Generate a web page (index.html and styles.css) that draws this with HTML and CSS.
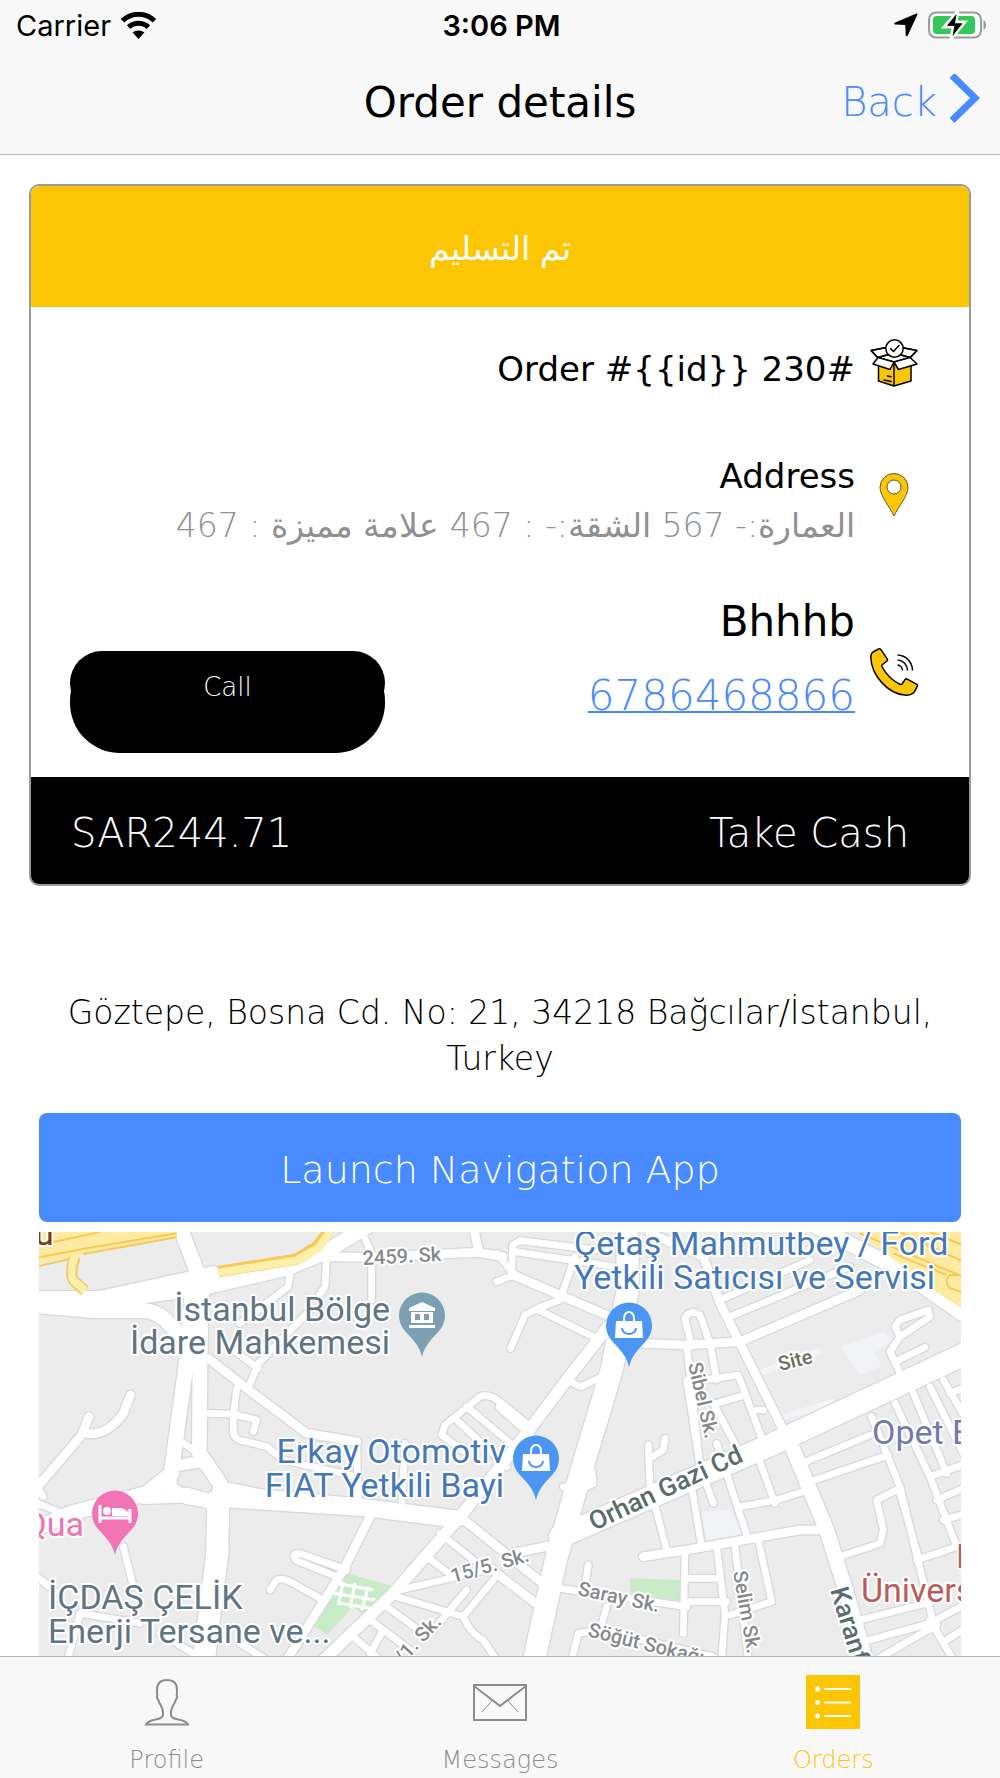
FILE: index.html
```html
<!DOCTYPE html>
<html lang="en">
<head>
  <meta charset="UTF-8">
  <meta name="viewport" content="width=device-width, initial-scale=1.0">
  <title>Order details</title>
  <link rel="stylesheet" href="styles.css">
</head>
<body>
  <header>
    <div class="status-bar">
      <div class="status-left">
        <span>Carrier</span>
        <svg class="wifi" width="37" height="27" viewBox="0 0 37 27">
          <path d="M2.5 8.8a23 23 0 0 1 32 0" />
          <path d="M8.6 15.2a14.500 14.500 0 0 1 19.800 0" />
          <path class="dot" d="M12.600 20.600a9 9 0 0 1 11.800 0L18.500 27z" />
        </svg>
      </div>
      <span class="time">3:06 PM</span>
      <div class="status-right">
        <svg width="24" height="24" viewBox="0 0 24 24">
          <path d="M22.500.6 1.200 9.400c-1.600.7-1.200 2.100.3 2.200l9.800.4.400 10c.1 1.500 1.500 1.700 2.200.2L23.400 1.500c.4-.9-.2-1.200-.9-.9z" />
        </svg>
        <svg width="60" height="30" viewBox="0 0 60 30">
          <rect x="2" y="2.500" width="52" height="25" rx="7" fill="none" stroke="#9c9c9c" stroke-width="2" />
          <path d="M56.500 10c3.500 1.500 3.500 8.500 0 10z" fill="#9c9c9c" />
          <rect x="6" y="6" width="42" height="18" rx="4" fill="#34c759" />
          <path d="M31 1 17 17h9l-2 12 14-17h-9z" stroke="#f8f8f8" stroke-width="3" />
          <path d="M29.500 4 20 15.700h7.500L25.500 26 35.500 13.500H28z" />
        </svg>
      </div>
    </div>
    <div class="title-bar">
      <h1>Order details</h1>
      <a class="back" href="#orders">Back
        <svg width="31" height="56" viewBox="0 0 31 56"><path d="M3 1.500 26 24 3 46.500" /></svg>
      </a>
    </div>
  </header>

  <main>
    <section class="card">
      <div class="card-status" lang="ar" dir="rtl">تم التسليم</div>

      <div class="card-body">
        <div class="item">
          <div class="text"><h2>Order #{{id}} 230#</h2></div>
          <svg class="icon" viewBox="0 0 48 48">
            <g stroke="#000" stroke-width="1.500" stroke-linejoin="round">
              <path d="M8.500 24v18L24 47l17-5V24L24 24z" fill="#fdc605" />
              <path d="M24 24v23" />
              <path d="M1 11.500 8 19l15 4 17-4 7-7.500L24 7z" fill="#fff" />
              <path d="M8 18.500 24 14l16 4.500L24 23z" fill="#fff" />
              <path d="M1 11.500 19 8M47 11.500 29 8M1 11.500l7 7L24 14l16 4.500 7-7" fill="none" />
              <path d="M8 18.500 24 23l-4 7.500L3 25z" fill="#fff" />
              <path d="M40 18.500 24 23l4.500 7.500L47 25z" fill="#fff" />
              <circle cx="24.500" cy="9.500" r="8.700" fill="#fff" />
              <path d="m20.500 9.500 3 3 5.500-6M14 41l7 1.500M17.500 37l3.500.7" fill="none" stroke-linecap="round" />
            </g>
          </svg>
        </div>

        <div class="item">
          <div class="text">
            <h2>Address</h2>
            <p lang="ar" dir="rtl">العمارة:- 567 الشقة:- : 467 علامة مميزة : 467</p>
          </div>
          <svg class="icon" viewBox="0 0 48 48">
            <path d="M24 45C20 36 10 25 10 16.500a14 14 0 0 1 28 0C38 25 28 36 24 45z" fill="#fdc605" stroke="#5b5640" />
            <circle cx="24" cy="16" r="7" fill="#fff" stroke="#5b5640" />
          </svg>
        </div>

        <div class="item contact">
          <div class="call-wrap"><button class="call">Call</button></div>
          <div class="text">
            <h3>Bhhhb</h3>
            <a class="phone" href="tel:6786468866">6786468866</a>
          </div>
          <svg class="icon" viewBox="0 0 48 48">
            <path d="M3 4 8.500 1c1-.5 1.800-.3 2.400.6l6.300 9.200c.6.900.4 1.600-.3 2.200L12.500 16.500c-.8.700-.8 1.500-.3 2.500C16 26 22 32.500 30 36.200c1 .4 1.800.3 2.300-.6l2.700-4c.6-.8 1.400-.9 2.300-.5l9.200 5c1 .6 1.200 1.400.7 2.300l-2.500 5c-2 3-5.500 4.200-10 3.600C18 45.500 1.500 28 .8 9.500.8 7 1.500 5 3 4z" fill="#fdc605" stroke="#000" stroke-width="1.500" />
            <path d="M27.500 7A15.500 15.500 0 0 1 42.500 22.500M27.500 12A10.500 10.500 0 0 1 37.500 22.500M27.500 17a5.500 5.500 0 0 1 5 5.500" fill="none" stroke="#000" stroke-width="1.500" />
          </svg>
        </div>
      </div>

      <div class="card-footer">
        <span>SAR244.71</span>
        <span>Take Cash</span>
      </div>
    </section>

    <p class="destination">Göztepe, Bosna Cd. No: 21, 34218 Bağcılar/İstanbul, Turkey</p>

    <div class="navigation">
      <button class="launch">Launch Navigation App</button>
      <svg class="map" viewBox="0 0 922 424" preserveAspectRatio="xMidYMin slice">
        <defs>
          <g id="roads">
            <g class="w20">
              <path d="M745 505 775 430 930 270M700 390 775 445M870 160 865 200 720 310M980 110 975 200 955 230M1090 45 1115 100V240M710 505 700 590M615 580 700 582 770 600 760 635M700 590V640Q705 662 740 665L800 680 850 720 1070 770M1070 670 1075 850M1215 670 1205 860M545 665 580 690" />
              <path d="M100 780 130 830M100 845 200 885M370 980 400 1100M100 1060 165 1115M1040 1050 900 1000Q870 1000 890 1022L1010 1070M810 1110 825 1085Q840 1070 870 1085L960 1135M200 1330 240 1180 420 1210M480 1240 580 1300M720 1270 800 1320" />
              <path d="M1320 940 1420 1020M1280 1010 1360 1070M1200 1110 1480 1045M1190 1130 1390 1190Q1410 1240 1450 1260L1490 1320M1160 1160 1270 1240M1110 1200 1230 1290M1150 1230 1110 1300M1060 1250 1140 1320M1390 1190 1480 1080M1300 1230 1400 1110" />
              <path d="M1400 560 1580 710M1370 600 1520 740M1325 645 1335 615 1440 530Q1465 520 1500 545L1590 620M1325 645 1400 700" />
            </g>
            <g class="w20" transform="translate(1500 0)">
              <path d="M35 170 38 75 60 62 330 95M45 95 340 140M-10 100 40 160M-10 185 40 165M185 225 225 110M32 385 75 285 120 262 180 240M115 270 290 355M200 480 242 500 295 475" />
              <path d="M660 240 930 120M690 290 1050 140M575 380 555 295Q570 265 600 285L630 370 650 480M560 375 600 740 640 850M560 480 600 740M560 490 610 480 715 465 735 520 795 680M650 550 735 525M640 550 720 700M770 570H790" />
              <path d="M575 800 605 980M650 670 745 960M720 860 830 840 910 815M770 700 825 850M450 800 500 990M445 675 450 800M450 715 490 690 495 655M250 805 280 790 275 750M190 800 230 830" />
              <path d="M555 990 550 1240M565 1075H655M560 1145H680M650 980 675 1180 665 1320M775 960 815 1145 690 1185M705 980 745 1320M180 1105 560 1160M265 1035 255 1100M320 1160 300 1230M215 1320 235 1240 300 1230 640 1310" />
              <path d="M1210 480 1170 395 1200 350 1290 290 1285 270 1200 300 1185 320 1200 350M1185 425 1275 382M1020 1010 1140 970 1150 930 1130 840 1200 805M905 730 1110 645M930 785 1165 705" />
              <path d="M1115 590 1200 800 1300 1210M1200 820 1255 1010M1185 550 1290 770 1370 980M1240 520 1340 760M1290 500 1400 720M1330 480 1400 600M1290 770 1400 730M1310 840 1400 800M1330 900 1400 880M1250 1020 1400 970M1080 1200 1280 1150M1090 1265 1290 1210 1400 1150M1110 1330 1310 1215M1290 1200 1360 1320M1340 1260 1400 1220M1350 520 1400 500" />
            </g>
            <g class="w26">
              <path d="M625 415 740 505 920 640 1070 665M970 110 1100 112 1430 97 1510 110M1420 20 1437 97M392 525 370 580Q320 650 260 640M267 590 245 645 100 815M1110 890 1030 1050 860 1320" />
              <path d="M1540 165 1830 290M1930 370 2060 375 2220 365 2580 210M1930 1010 2060 990 2400 930H2460M1380 890 1640 1100M1490 1060 1620 1160M1500 560 1590 640M1540 1000 1660 975M1950 40 2110 110" />
              <path d="M2110 110 2160 250 2230 390 2380 690" />
            </g>
            <g class="w34">
              <path d="M1840 300 1700 480 1580 640 1380 890 1180 1120 960 1330M680 845 1100 872 1360 905M515 750 512 800 560 835 650 850M540 735 600 725" />
            </g>
            <g class="w44">
              <path d="M90 235 300 235 600 170 640 160M300 245 600 205 860 145 970 100 1100 20M540 20 600 180M90 255 280 272 430 272Q480 275 510 315L550 350M578 190 560 420 515 750M605 200 600 420 598 700 660 790M430 830 560 825 650 850M660 805 780 830 1100 860 1380 895M2380 690 2480 930 2540 1120 2600 1330M515 760 440 820 210 880 90 935" />
              <path d="M2450 20 2700 150 2900 290" />
            </g>
            <g class="w66">
              <path d="M655 840 652 1000 610 1330M1880 20 1885 200 1835 450 1730 800 1670 1010 1600 1330M1680 950 2300 680 2920 390" />
            </g>
          </g>
          <path id="pin" d="M0 42C-3 30-8 26-17 16A23 23 0 1 1 17 16C8 26 3 30 0 42z" />
          <g id="bag">
            <use href="#pin" fill="#4b96f3" />
            <path d="M-13-4H13L14 13H-14z" fill="#fff" />
            <path d="M-5-3V-7a5 6 0 0 1 10 0v4" fill="none" stroke="#fff" stroke-width="2" />
            <path d="M-7 3a7 6 0 0 0 14 0" fill="none" stroke="#4b96f3" stroke-width="2" />
          </g>
        </defs>

        <rect width="922" height="424" fill="#ececec" />
        <!-- roads are plotted at three units to the pixel -->
        <g transform="scale(.33333) translate(-117 -36)">
          <g fill="#c8ebc8">
            <path d="M1040 1060 1185 1100 1100 1195 1060 1160 980 1245 935 1210 1010 1120zM1890 1075 2042 1080V1142L1890 1120zM2580 510 2630 485 2645 510 2460 590 2445 570z" />
          </g>
          <g fill="#f1f3f6">
            <path d="M2520 380 2650 335 2680 360 2625 400 2645 440 2580 465zM2105 875 2190 870 2235 950 2120 965z" />
          </g>
          <path d="M2275 460 2460 392M2340 595 2500 545" class="lane" />
          <use href="#roads" class="casing" />
          <use href="#roads" class="fill" />
          <path d="M1010 1090 1120 1110M1000 1120 1125 1140M1020 1150 1110 1165M1030 1085 1015 1155M1065 1090 1050 1165M1105 1100 1085 1170M2470 580 2630 515M2500 560 2510 590M2540 545 2550 570M2580 525 2590 555" class="paths" />
          <path d="M117 36H530V50L117 130z" class="yellow" />
          <path d="M117 75 300 36M117 112 260 85 530 40M117 138 205 118M250 102 530 52" class="orange" />
          <path d="M225 110Q205 170 225 185L255 212" class="ramp-edge" />
          <path d="M225 105Q205 170 225 185L255 212" class="ramp" />
          <path d="M655 155 890 117 950 80 985 36" class="ramp-edge" />
          <path d="M655 158 890 121 955 84 990 36" class="ramp" />
          <path d="M2570 36H2900V275L2800 210 2670 110z" class="yellow" />
          <path d="M2580 40 2900 175M2700 36 2900 130M2790 36 2900 80M2680 100 2840 165M2900 165 2850 165Q2830 185 2850 205L2900 220" class="orange" />
        </g>

        <g transform="translate(383 83)">
          <use href="#pin" fill="#7c9fb3" />
          <path d="M0-13 13-7V-4H-13V-7zM-11-3h4V8h-4zM-2-3h4V8h-4zM7-3h4V8H7zM-11 5H11v3H-11zM-11-3H11v2H-11zM-13 10H13v3H-13z" fill="#fff" />
        </g>
        <use href="#bag" x="590" y="93" />
        <use href="#bag" x="497" y="226" />
        <g transform="translate(76 281)">
          <use href="#pin" fill="#f074b6" />
          <path d="M-15-8V10M15-4V10M-15 5H15" fill="none" stroke="#fff" stroke-width="3" />
          <path d="M-3 3V-5H6Q14-3 15 3z" fill="#fff" />
          <circle cx="-8" cy="-2" r="4" fill="#fff" />
        </g>

        <g class="place">
          <g fill="#5f7583">
            <text x="351" y="89" text-anchor="end">İstanbul Bölge</text>
            <text x="351" y="122" text-anchor="end">İdare Mahkemesi</text>
            <text x="9" y="377">İÇDAŞ ÇELİK</text>
            <text x="9" y="411">Enerji Tersane ve...</text>
          </g>
          <g fill="#4478b8">
            <text x="535" y="23">Çetaş Mahmutbey / Ford</text>
            <text x="535" y="57">Yetkili Satıcısı ve Servisi</text>
            <text x="467" y="231" text-anchor="end">Erkay Otomotiv</text>
            <text x="465" y="265" text-anchor="end">FIAT Yetkili Bayi</text>
          </g>
          <text x="45" y="304" text-anchor="end" fill="#ee74b4">Qua</text>
          <text x="833" y="212" fill="#7479ac">Opet E</text>
          <text x="822" y="370" fill="#bb5c5c">Üniversi</text>
          <text x="917" y="336" fill="#bb5c5c">H</text>
          <text x="-4" y="13" fill="#7a3c10">u</text>
        </g>
        <g class="street">
          <text transform="translate(324 33) rotate(-3)">2459. Sk</text>
          <text transform="translate(414 351) rotate(-16)">15/5. Sk.</text>
          <text transform="translate(364 433) rotate(-47)">/1. Sk.</text>
          <text transform="translate(741 139) rotate(-14)" fill="#6e6b5e">Site</text>
          <text transform="translate(649 132) rotate(77)">Sibel Sk.</text>
          <text transform="translate(538 363) rotate(12)">Saray Sk.</text>
          <text transform="translate(548 404) rotate(14)">Söğüt Sokağı</text>
          <text transform="translate(694 340) rotate(80)">Selim Sk.</text>
          <g class="avenue">
            <text transform="translate(555 299) rotate(-25)">Orhan Gazi Cd</text>
            <text transform="translate(791 358) rotate(73)">Karanfil</text>
          </g>
        </g>
      </svg>
    </div>
  </main>

  <nav class="tabs">
    <a href="#profile">
      <svg width="54" height="54" viewBox="0 0 54 54">
        <path d="M27 5c-7 0-10 4-10 10 0 2 0 3 .3 5-.8 1.500.2 4 1 5 .7 4 4.700 7 4.700 12v3c0 6-14 3-17 9.500h42C45 43 31 46 31 40v-3c0-5 4-8 4.700-12 .8-1 1.800-3.500 1-5 .3-2 .3-3 .3-5 0-6-3-10-10-10z" fill="none" stroke="#8c8c8c" stroke-width="2" />
      </svg>
      Profile
    </a>
    <a href="#messages">
      <svg width="54" height="54" viewBox="0 0 54 54" fill="none" stroke="#8c8c8c" stroke-width="2">
        <path d="M1 10H53V45H1zM1 11 27 31 53 11" />
        <path d="M19.500 25.500 9 37M34.500 25.500 45 37" stroke-width="1" />
      </svg>
      Messages
    </a>
    <a class="active" href="#orders">
      <svg width="54" height="54" viewBox="0 0 54 54">
        <path d="M0 0H54V54H0z" fill="#fdc605" />
        <path d="M18 14H45M18 27.500H45M18 41H45" stroke="#fff" stroke-width="2" />
        <g fill="#fff"><circle cx="11.500" cy="14" r="2.500" /><circle cx="11.500" cy="27.500" r="2.500" /><circle cx="11.500" cy="41" r="2.500" /></g>
      </svg>
      Orders
    </a>
  </nav>
</body>
</html>
```
FILE: styles.css
```css
* {
  box-sizing: border-box;
}

body {
  margin: 0;
  height: 100vh;
  display: flex;
  flex-direction: column;
  background: #fff;
  color: #000;
  font-family: "DejaVu Sans", sans-serif;
  font-weight: 200;
  font-size: 33px;
}

h1, h2, h3, p {
  margin: 0;
  font-weight: 400;
}

a {
  color: #488aff;
  text-decoration: none;
}

button {
  border: 0;
  font: inherit;
  color: #fff;
}

header {
  background: #f8f8f8;
  border-bottom: 1px solid #b5b5b5;
}

.status-bar,
.title-bar {
  display: grid;
  grid-template-columns: 1fr auto 1fr;
  align-items: center;
}

.status-bar {
  height: 50px;
  padding: 0 13px 0 16px;
  font-family: Inter, sans-serif;
  font-size: 29px;
  font-weight: 400;
}

.status-left,
.status-right {
  display: flex;
  align-items: center;
  gap: 9px;
}

.status-right {
  justify-content: flex-end;
}

.wifi path {
  fill: none;
  stroke: #000;
  stroke-width: 5;
}

.wifi .dot {
  fill: #000;
  stroke: none;
}

.time {
  font-weight: 600;
}

.title-bar {
  height: 104px;
  padding: 0 20px;
}

.title-bar h1 {
  grid-column: 2;
  font-size: 42px;
}

.back {
  display: flex;
  justify-content: flex-end;
  align-items: center;
  gap: 12px;
  font-size: 40px;
}

.back path {
  fill: none;
  stroke: #488aff;
  stroke-width: 7;
}

main {
  flex: 1;
  min-height: 0;
  display: flex;
  flex-direction: column;
  overflow: hidden;
}

.card {
  margin: 29px 29px 0;
  border: 2px solid #9b9b9b;
  border-radius: 10px;
  overflow: hidden;
  flex-shrink: 0;
}

.card-status {
  height: 121px;
  padding-top: 4px;
  display: flex;
  align-items: center;
  justify-content: center;
  background: #fdc605;
  color: #fff;
}

.card-body {
  padding: 26px 51px 24px 39px;
}

.item {
  display: flex;
  align-items: center;
  gap: 15px;
  min-height: 72px;
  margin-bottom: 46px;
}

.item .text {
  flex: 1;
  text-align: right;
  line-height: 50px;
}

.item h2 {
  font-size: 34px;
}

.item p {
  color: #8e9092;
  font-weight: 200;
  text-align: start;
}

.icon {
  width: 48px;
  height: 48px;
  margin-bottom: 12px;
  flex-shrink: 0;
}

.contact {
  min-height: 162px;
  margin-top: -6px;
  margin-bottom: 0;
}

.contact .text {
  align-self: flex-start;
  line-height: 62px;
  font-size: 42px;
}

.contact h3 {
  font-size: 42px;
  margin-bottom: 12px;
}

.contact .icon {
  margin-bottom: 0;
}

.phone {
  text-decoration: underline;
  text-decoration-thickness: 2px;
}

/* the inner pill is shorter than the outer one, both stay visible */
.call-wrap {
  width: 315px;
  height: 102px;
  align-self: flex-end;
  border-radius: 50px;
  background: #000;
}

.call {
  width: 100%;
  height: 64px;
  padding: 8px 0 0;
  display: block;
  border-radius: 32px;
  background: #000;
  font-size: 26px;
}

.card-footer {
  height: 107px;
  padding: 4px 60px 0 40px;
  display: flex;
  align-items: center;
  justify-content: space-between;
  background: #000;
  color: #fff;
  font-size: 40px;
}

.destination {
  margin: 104px 60px 31px;
  font-weight: 200;
  text-align: center;
  line-height: 46px;
}

.navigation {
  flex: 1;
  min-height: 0;
  margin: 0 39px;
  display: flex;
  flex-direction: column;
  gap: 10px;
}

.launch {
  height: 109px;
  padding: 4px 0 0;
  flex-shrink: 0;
  border-radius: 8px;
  background: #488aff;
  font-size: 38px;
}

.map {
  width: 100%;
  flex: 1;
  min-height: 0;
  font-family: Roboto, sans-serif;
  font-weight: 400;
}

.casing {
  --edge: 8px;
  stroke: #d8d9df;
}

.fill {
  --edge: 0px;
  stroke: #fff;
}

#roads {
  fill: none;
  stroke-linejoin: round;
  stroke-linecap: round;
}

.w20 { stroke-width: calc(20px + var(--edge)); }
.w26 { stroke-width: calc(26px + var(--edge)); }
.w34 { stroke-width: calc(34px + var(--edge)); }
.w44 { stroke-width: calc(44px + var(--edge)); }
.w66 { stroke-width: calc(66px + var(--edge)); }

.lane,
.paths,
.orange,
.ramp,
.ramp-edge {
  fill: none;
  stroke: #f3f4f7;
  stroke-width: 18px;
}

.paths {
  stroke: #fff;
  stroke-width: 9px;
}

.yellow {
  fill: #feeaa0;
}

.orange {
  stroke: #f6c957;
  stroke-width: 6px;
}

.ramp {
  stroke: #feefab;
  stroke-width: 24px;
}

.ramp-edge {
  stroke: #f6c957;
  stroke-width: 34px;
}

.map text {
  paint-order: stroke;
  stroke: #fff;
  stroke-width: 4px;
  stroke-linejoin: round;
}

.place {
  font-size: 34px;
}

.street {
  font-size: 20px;
  font-weight: 500;
  fill: #85898b;
}

.avenue {
  font-size: 26px;
  fill: #5c6b70;
}

.tabs {
  height: 122px;
  flex-shrink: 0;
  display: grid;
  grid-template-columns: repeat(3, 1fr);
  background: #f8f8f8;
  border-top: 1px solid #b5b5b5;
}

.tabs a {
  padding-top: 18px;
  display: flex;
  flex-direction: column;
  align-items: center;
  gap: 16px;
  color: #8c8c8c;
  font-size: 24px;
  line-height: 30px;
}

.tabs .active {
  color: #fdc605;
}
```
